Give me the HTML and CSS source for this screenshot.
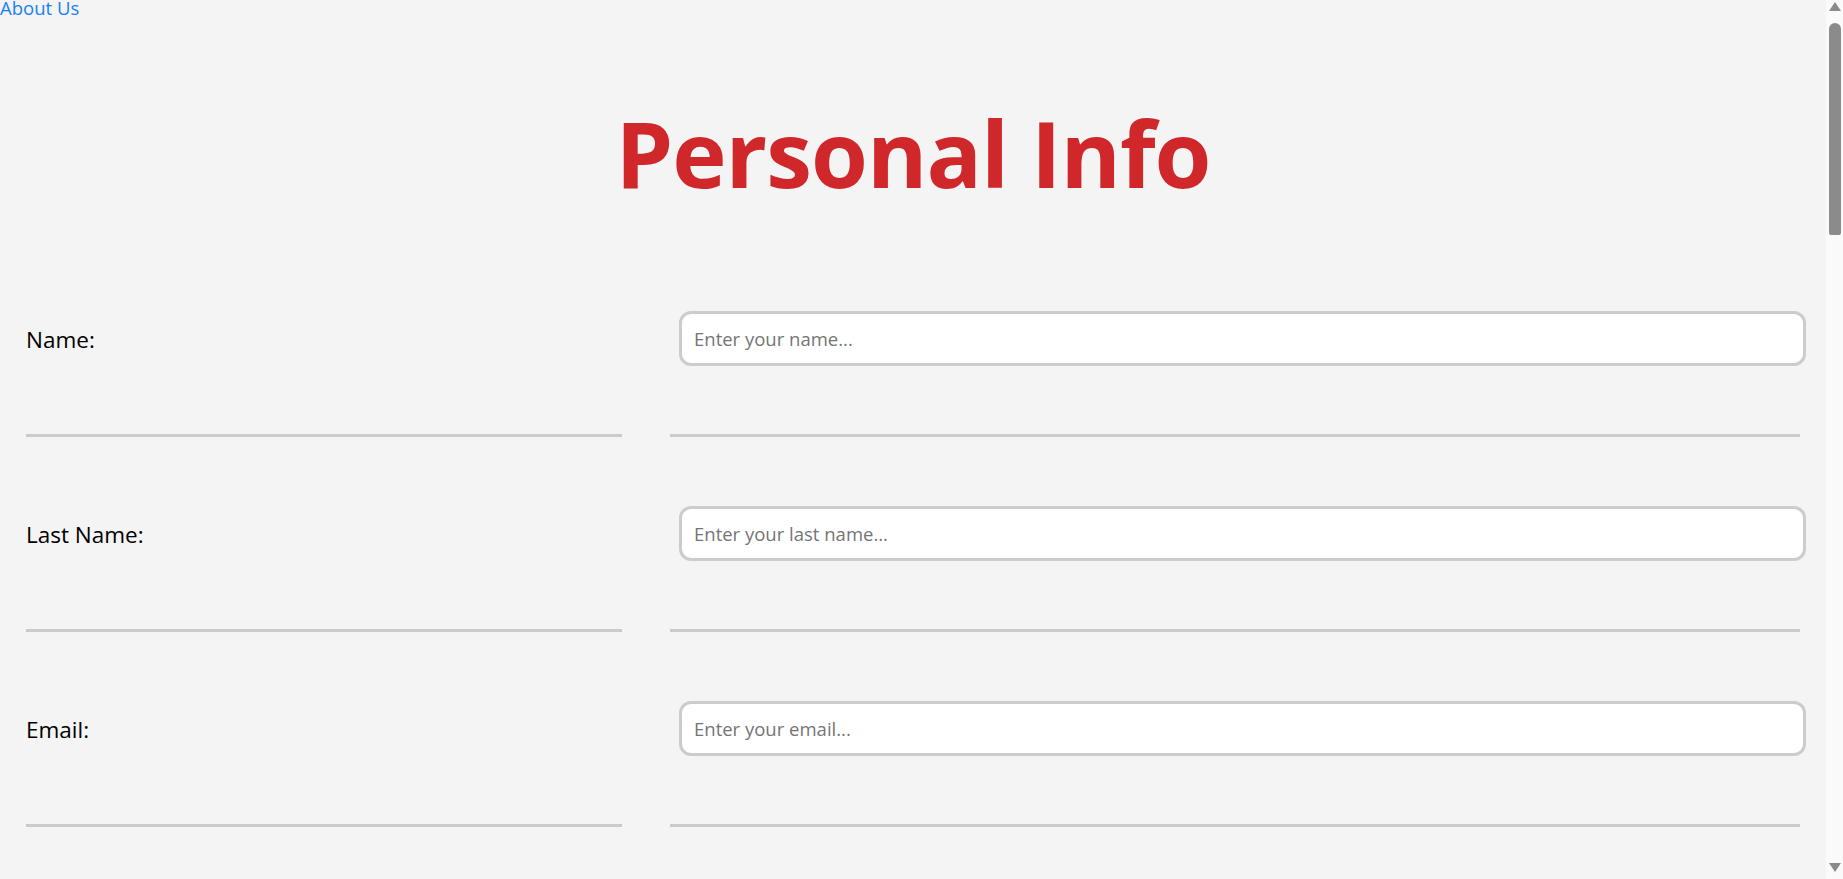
FILE: index.html
```html
<!DOCTYPE html>
<html lang="en">
<head>
<meta charset="utf-8">
<title>Personal Info</title>
<link rel="stylesheet" href="styles.css">
</head>
<body>
<div class="window">
  <div class="page">
    <a class="top-link" href="#">About Us</a>
    <header class="hero">
      <h1 class="title">Personal Info</h1>
    </header>
    <form class="form">
      <div class="cell label-cell"><label for="name">Name:</label></div>
      <div class="cell field-cell"><input id="name" class="field" type="text" placeholder="Enter your name..."></div>
      <div class="cell label-cell"><label for="last">Last Name:</label></div>
      <div class="cell field-cell"><input id="last" class="field" type="text" placeholder="Enter your last name..."></div>
      <div class="cell label-cell"><label for="email">Email:</label></div>
      <div class="cell field-cell"><input id="email" class="field" type="email" placeholder="Enter your email..."></div>
    </form>
  </div>
  <div class="scrollbar">
    <div class="arrow arrow-up"></div>
    <div class="track"><div class="thumb"></div></div>
    <div class="arrow arrow-down"></div>
  </div>
</div>
</body>
</html>
```

FILE: styles.css
```css
html, body {
  margin: 0;
  padding: 0;
  height: 100%;
  overflow: hidden;
}

body {
  font-family: "Open Sans", "Noto Sans", sans-serif;
  background: #f4f4f4;
}

.window {
  display: flex;
  height: 879px;
  overflow: hidden;
}

.page {
  flex: 1;
  min-width: 0;
  overflow: hidden;
  background: #f4f4f4;
}

.top-link {
  display: block;
  width: max-content;
  height: 17px;
  padding-top: 1px;
  box-sizing: border-box;
  font-size: 18.5px;
  line-height: 14px;
  color: #1a80fb;
  text-decoration: none;
}

.hero {
  height: 225px;
}

.title {
  margin: 0;
  padding-top: 90px;
  text-align: center;
  font-size: 92px;
  line-height: 92px;
  font-weight: 700;
  color: #d0282a;
  letter-spacing: -1px;
}

.form {
  display: grid;
  grid-template-columns: 596px 1fr;
  column-gap: 48px;
  padding: 0 26px;
}

.cell {
  height: 192px;
  border-bottom: 3px solid #cbcbcb;
  box-sizing: content-box;
}

.label-cell {
  display: flex;
  align-items: center;
  font-size: 22.5px;
  color: #000;
}

.label-cell label {
  padding-top: 3px;
}

.field {
  display: block;
  box-sizing: border-box;
  margin: 69px 0 0 9px;
  width: calc(100% - 3px);
  height: 55px;
  border: 3px solid #cccccc;
  border-radius: 12px;
  background: #fff;
  padding: 0 12px;
  font-family: inherit;
  font-size: 18.5px;
  color: #000;
  outline: none;
}

.field::placeholder {
  color: #757575;
}

.scrollbar {
  width: 17px;
  flex: none;
  background: #fafafa;
  display: flex;
  flex-direction: column;
  align-items: center;
}

.arrow {
  width: 0;
  height: 0;
  border-left: 6px solid transparent;
  border-right: 6px solid transparent;
  flex: none;
}

.arrow-up {
  margin-top: 2px;
  border-bottom: 9px solid #8a8a8a;
}

.arrow-down {
  margin-bottom: 7px;
  border-top: 9px solid #8a8a8a;
}

.track {
  flex: 1;
  width: 100%;
  display: flex;
  justify-content: center;
  padding-top: 12px;
}

.thumb {
  width: 12px;
  height: 212px;
  border-radius: 6px 6px 2px 2px;
  background: #8b8b8b;
}
```
